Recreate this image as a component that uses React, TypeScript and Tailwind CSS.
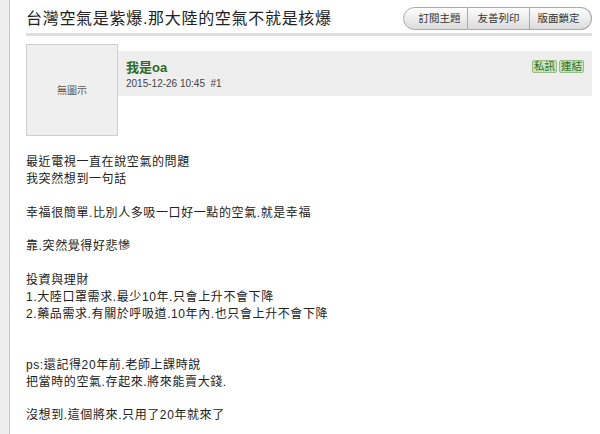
import React from 'react';

const lines: string[] = [
  '最近電視一直在說空氣的問題',
  '我突然想到一句話',
  '',
  '幸福很簡單.比別人多吸一口好一點的空氣.就是幸福',
  '',
  '靠.突然覺得好悲慘',
  '',
  '投資與理財',
  '1.大陸口罩需求.最少10年.只會上升不會下降',
  '2.藥品需求.有關於呼吸道.10年內.也只會上升不會下降',
  '',
  '',
  'ps:還記得20年前.老師上課時說',
  '把當時的空氣.存起來.將來能賣大錢.',
  '',
  '沒想到.這個將來.只用了20年就來了',
];

const font = { fontFamily: '"Liberation Sans", "Noto Sans CJK TC", sans-serif' };

export default function App() {
  return (
    <div className="flex min-h-[434px] bg-white text-[#222]" style={font}>
      {/* left gutter */}
      <div className="w-[10px] shrink-0 bg-[#ededed] border-r border-[#c9c9c9]" />

      <div className="flex-1 pl-4 pr-2">
        {/* title row */}
        <div className="flex items-center justify-between pt-[7px] h-[30px]">
          <h1 className="text-[16px] leading-[23px] tracking-[0.7px] text-[#222]">
            台灣空氣是紫爆.那大陸的空氣不就是核爆
          </h1>
          <div className="flex h-[23px] text-[10.5px] text-[#333]">
            <button className="w-[65px] rounded-l-full border border-[#a9a9a9] bg-gradient-to-b from-[#fdfdfd] to-[#dcdcdc] pl-2">
              訂閱主題
            </button>
            <button className="w-[62px] border-y border-r border-[#a9a9a9] bg-gradient-to-b from-[#fdfdfd] to-[#dcdcdc]">
              友善列印
            </button>
            <button className="w-[62px] rounded-r-full border-y border-r border-[#a9a9a9] bg-gradient-to-b from-[#fdfdfd] to-[#dcdcdc] pr-1">
              版面鎖定
            </button>
          </div>
        </div>
        <div className="mt-[3px] border-b-[3px] border-[#dedede]" />

        {/* author row */}
        <div className="mt-[8px] flex">
          <div className="flex h-[92px] w-[92px] shrink-0 items-center justify-center border border-[#cfcfcf] bg-[#efefef] text-[10px] text-[#555]">
            無圖示
          </div>
          <div className="mt-[7px] flex h-[45px] flex-1 justify-between bg-[#eeeeee] pl-2 pr-[8px]">
            <div className="pt-[9px]">
              <div className="text-[13px] font-bold leading-[16px] text-[#2f6a1f]">我是oa</div>
              <div className="mt-[2px] text-[10px] leading-[12px] text-[#444] whitespace-pre">2015-12-26 10:45  #1</div>
            </div>
            <div className="flex gap-[2px] pt-[9px]">
              <span className="h-[13px] rounded-[2px] border border-[#93be86] bg-[#c9e3c0] px-[1px] text-[10.5px] leading-[11px] text-[#2d6b22]">私訊</span>
              <span className="h-[13px] rounded-[2px] border border-[#93be86] bg-[#c9e3c0] px-[1px] text-[10.5px] leading-[11px] text-[#2d6b22]">連結</span>
            </div>
          </div>
        </div>

        {/* post body */}
        <div className="mt-[18px] text-[12px] leading-[16.9px] tracking-[0.6px]">
          {lines.map((line, i) => (
            <div key={i} className="h-[16.9px]">{line}</div>
          ))}
        </div>
      </div>
    </div>
  );
}
